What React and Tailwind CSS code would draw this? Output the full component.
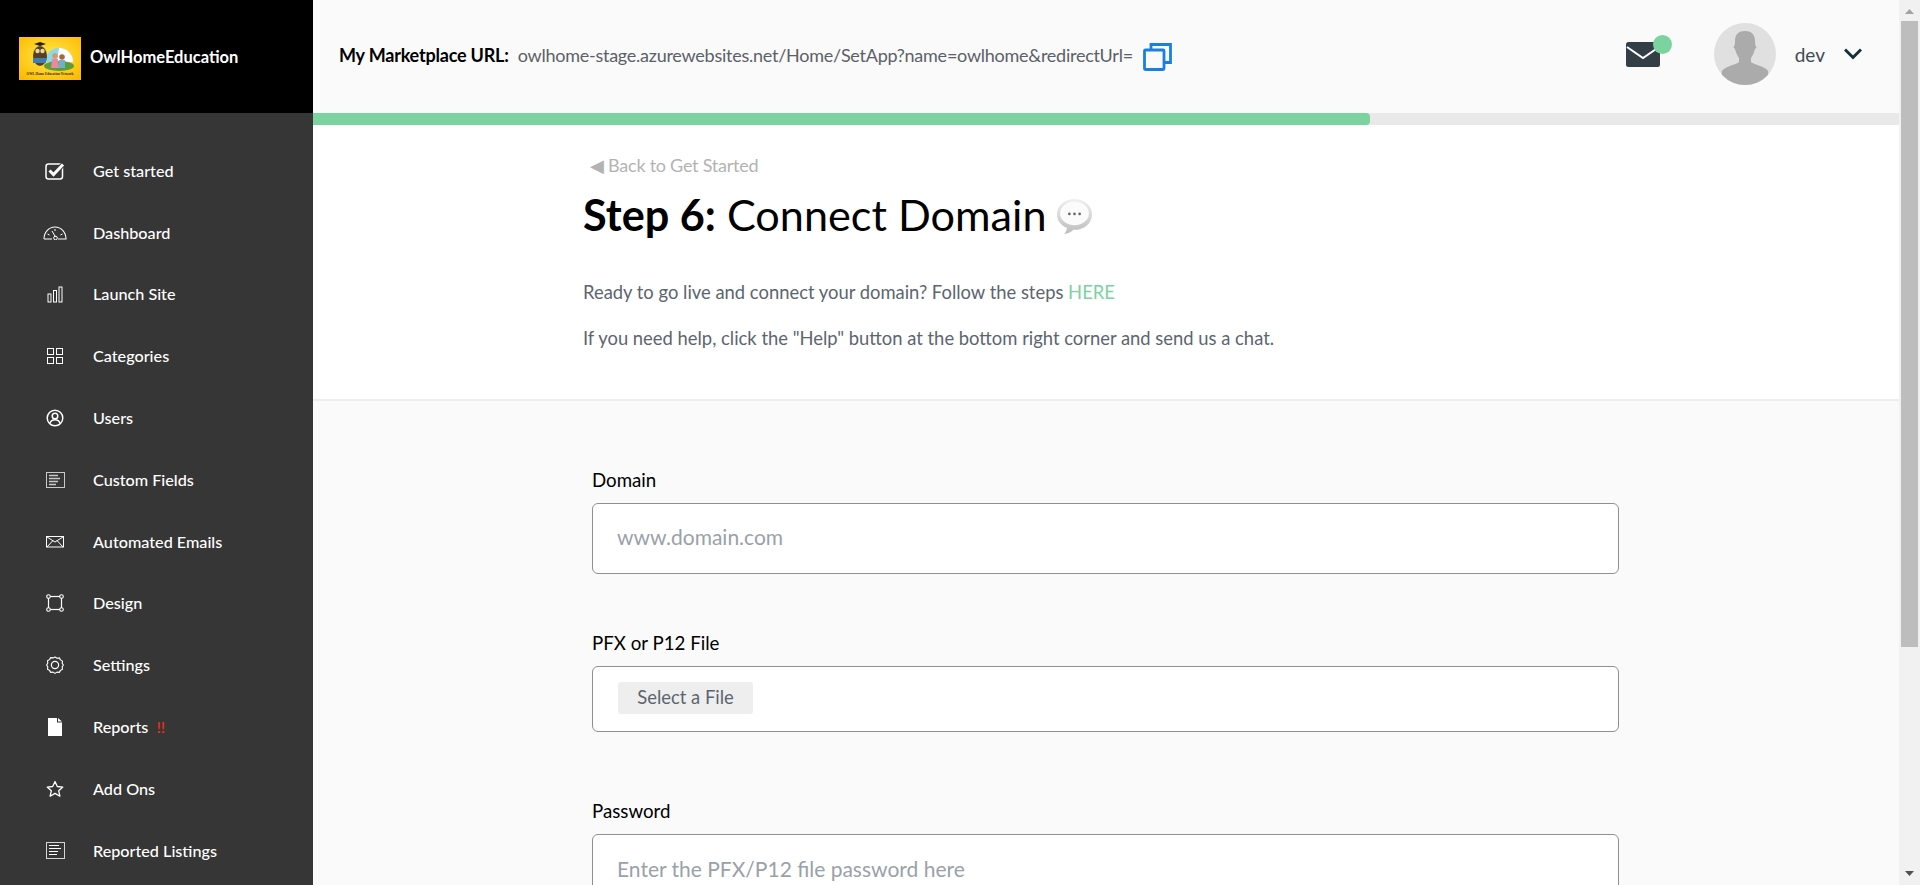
import React from "react";

const stroke = { fill: "none", stroke: "currentColor", strokeWidth: 1.5 };

const icons = {
  check: (
    <svg width="20" height="18" viewBox="0 0 20 18">
      <rect x="1" y="2" width="16.5" height="15" rx="2.5" {...stroke} />
      <path d="M4.5 8.5l4 4L18 2.5" fill="none" stroke="#363636" strokeWidth="5" />
      <path d="M4.5 8.5l4 4L18 2.5" fill="none" stroke="currentColor" strokeWidth="3" />
    </svg>
  ),
  gauge: (
    <svg width="24" height="14" viewBox="0 0 24 14">
      <path d="M1 13C1 6 6 1 12 1s11 5 11 12H15M9 13H1" {...stroke} strokeWidth="1.1" />
      <path d="M9 5l3.5 6M4.5 8l2 1M19.5 8l-2 1M12 3v2" {...stroke} strokeWidth="1" />
      <circle cx="12.5" cy="12" r="1.8" {...stroke} strokeWidth="1" />
    </svg>
  ),
  bars: (
    <svg width="16" height="17" viewBox="0 0 16 17">
      <rect x="1" y="8" width="3" height="8" {...stroke} strokeWidth="1" />
      <rect x="6.5" y="4.5" width="3" height="11.5" {...stroke} strokeWidth="1" />
      <rect x="12" y="1" width="3" height="15" {...stroke} strokeWidth="1" />
    </svg>
  ),
  grid: (
    <svg width="16" height="16" viewBox="0 0 16 16">
      <rect x="0.5" y="0.5" width="6" height="6" {...stroke} strokeWidth="1" />
      <rect x="9.5" y="0.5" width="6" height="6" {...stroke} strokeWidth="1" />
      <rect x="0.5" y="9.5" width="6" height="6" {...stroke} strokeWidth="1" />
      <rect x="9.5" y="9.5" width="6" height="6" {...stroke} strokeWidth="1" />
    </svg>
  ),
  user: (
    <svg width="18" height="18" viewBox="0 0 18 18">
      <circle cx="9" cy="9" r="7.8" {...stroke} />
      <circle cx="9" cy="7" r="2.8" {...stroke} />
      <path d="M3.8 14.5c1-3 3-3.8 5.2-3.8s4.2.8 5.2 3.8" {...stroke} />
    </svg>
  ),
  fields: (
    <svg width="19" height="16" viewBox="0 0 19 16">
      <rect x="0.5" y="0.5" width="18" height="15" fill="none" stroke="#c9c9c9" />
      <path d="M3 3.5h9M3 6.5h11M3 9.5h9M3 12.5h7" stroke="#c9c9c9" strokeWidth="1.4" />
    </svg>
  ),
  mail: (
    <svg width="18" height="12" viewBox="0 0 18 12">
      <rect x="0.5" y="0.5" width="17" height="10.5" {...stroke} strokeWidth="1" />
      <path d="M1 1l8 5 8-5M1 11l6-6.5M17 11l-6-6.5" {...stroke} strokeWidth="1" />
    </svg>
  ),
  design: (
    <svg width="18" height="18" viewBox="0 0 18 18">
      <rect x="2.5" y="2.5" width="13" height="13" {...stroke} strokeWidth="1.2" />
      {[[2.5, 2.5], [15.5, 2.5], [2.5, 15.5], [15.5, 15.5]].map(([cx, cy]) => (
        <circle key={`${cx}-${cy}`} cx={cx} cy={cy} r="1.8" fill="#363636" stroke="currentColor" strokeWidth="1.1" />
      ))}
    </svg>
  ),
  gear: (
    <svg width="18" height="18" viewBox="0 0 18 18">
      <path d="M9 1l2 1.2 2.3-.3 1.2 2 2 1.2-.3 2.3L17.4 9l-1.2 1.900.3 2.300-2 1.200-1.200 2-2.300-.3L9 17.400l-2-1.300-2.300.3-1.200-2-2-1.200.3-2.300L.6 9l1.200-1.900-.3-2.300 2-1.200 1.200-2 2.300.3z" {...stroke} strokeWidth="1.1" strokeLinejoin="round" />
      <circle cx="9" cy="9" r="3.6" {...stroke} strokeWidth="1.2" />
    </svg>
  ),
  file: (
    <svg width="14" height="18" viewBox="0 0 14 18">
      <path d="M0 0h9v4.5h5V18H0zM10 0l4 3.5h-4z" fill="currentColor" />
    </svg>
  ),
  star: (
    <svg width="18" height="18" viewBox="0 0 18 18">
      <path d="M9 1.500l2.300 5 5.500.6-4.100 3.700 1.200 5.400L9 13.400l-4.900 2.800 1.200-5.400L1.200 7.100l5.500-.6z" {...stroke} strokeWidth="1.3" strokeLinejoin="round" />
    </svg>
  ),
  list: (
    <svg width="19" height="17" viewBox="0 0 19 17">
      <rect x="0.5" y="0.5" width="18" height="16" fill="none" stroke="#d5d5d5" />
      <path d="M3 3.5h10M3 6.5h12M3 9.5h9M3 12.5h8" stroke="#fff" strokeWidth="1" />
    </svg>
  ),
};

const menu = [
  { label: "Get started", icon: "check" },
  { label: "Dashboard", icon: "gauge" },
  { label: "Launch Site", icon: "bars" },
  { label: "Categories", icon: "grid" },
  { label: "Users", icon: "user" },
  { label: "Custom Fields", icon: "fields" },
  { label: "Automated Emails", icon: "mail" },
  { label: "Design", icon: "design" },
  { label: "Settings", icon: "gear" },
  { label: "Reports", icon: "file", flag: true },
  { label: "Add Ons", icon: "star" },
  { label: "Reported Listings", icon: "list" },
];

const Logo = () => (
  <svg width="62" height="43" viewBox="0 0 62 43" className="shrink-0">
    <defs>
      <radialGradient id="sun" cx="50%" cy="45%" r="70%">
        <stop offset="0%" stopColor="#ffe94a" />
        <stop offset="100%" stopColor="#fdb900" />
      </radialGradient>
    </defs>
    <rect width="62" height="43" fill="url(#sun)" />
    <path d="M26 25a14 14 0 0 1 28 0z" fill="#8fd8e8" />
    <path d="M40 11a14 14 0 0 1 14 14H38z" fill="#fff" />
    <ellipse cx="40" cy="29" rx="15" ry="5" fill="#5c9e3c" />
    <path d="M15 7l6-2 6 2-6 2z" fill="#222" />
    <ellipse cx="21" cy="19" rx="7" ry="10" fill="#5a4022" />
    <circle cx="18.5" cy="14" r="2.2" fill="#e8d9a0" />
    <circle cx="23.5" cy="14" r="2.2" fill="#e8d9a0" />
    <path d="M14 21h13v5H14z" fill="#3c7fb8" />
    <circle cx="36" cy="19" r="2.8" fill="#d59a6c" />
    <path d="M33 22h6l1 9h-8z" fill="#e58aa0" />
    <circle cx="43" cy="20" r="2.8" fill="#a8683c" />
    <path d="M40 23h6v8h-6z" fill="#6fb0c8" />
    <text x="31" y="37.5" textAnchor="middle" fontSize="3.4" fontWeight="700" fill="#3a2a00" fontFamily="'Liberation Serif', serif">OWL Home Education Network</text>
  </svg>
);

const Avatar = () => (
  <svg width="62" height="62" viewBox="0 0 62 62">
    <clipPath id="avatar-clip"><circle cx="31" cy="31" r="31" /></clipPath>
    <circle cx="31" cy="31" r="31" fill="#e0e0e0" />
    <g clipPath="url(#avatar-clip)" fill="#ababab">
      <path d="M31 8c6 0 10 3 10 10 0 3 .5 5 1.5 6.5l-1.5 1.5c-1 4-2.5 7-4 9v4c3 3 14 4 17 9l2 14H6l2-14c3-5 14-6 17-9v-4c-1.500-2-3-5-4-9l-1.500-1.500C20.500 23 21 21 21 18c0-7 4-10 10-10z" />
    </g>
  </svg>
);

const Bubble = () => (
  <svg width="37" height="37" viewBox="0 0 36 36">
    <defs>
      <linearGradient id="bubble" x1="0" y1="0" x2="0" y2="1">
        <stop offset="0%" stopColor="#f0f0f0" />
        <stop offset="100%" stopColor="#bdbdbd" />
      </linearGradient>
    </defs>
    <path d="M18 1c9 0 17 6 17 15s-8 15-17 15h-1c-2 2-5 4-9 4 2-2 2.5-4 2.5-6C5 27 1 22 1 16 1 7 9 1 18 1z" fill="url(#bubble)" />
    <ellipse cx="18" cy="15" rx="14" ry="11.5" fill="#fbfbfb" />
    <circle cx="13" cy="15.5" r="1.3" fill="#666" />
    <circle cx="18" cy="15.5" r="1.3" fill="#666" />
    <circle cx="23" cy="15.5" r="1.3" fill="#666" />
  </svg>
);

const Field = ({ label, className, children }) => (
  <div className={className}>
    <label className="block text-[18.7px] leading-[22px] text-black">{label}</label>
    {children}
  </div>
);

const App = () => {
  return (
    <div className="flex h-[885px] overflow-hidden bg-[#fafafa] font-['Lato',sans-serif]">
      {/* Sidebar */}
      <aside className="w-[313px] shrink-0 bg-[#363636] text-white">
        <div className="flex h-[113px] items-center bg-black pl-[19px] pt-[4px]">
          <Logo />
          <span className="mb-[3px] ml-[9px] text-[16.5px] font-bold">OwlHomeEducation</span>
        </div>
        <nav className="pt-[27px]">
          {menu.map((item) => (
            <a key={item.label} className="flex h-[61.8px] items-center text-[16.2px] font-medium">
              <span className="flex w-[93px] shrink-0 justify-center pl-[37px] pr-[20px]">{icons[item.icon]}</span>
              {item.label}
              {item.flag && <span className="ml-[8px] font-medium text-[#e8301c]">!!</span>}
            </a>
          ))}
        </nav>
      </aside>

      {/* Main */}
      <div className="min-w-0 flex-1">
        <header className="flex h-[113px] items-center pb-[2px] pl-[26px]">
          <span className="text-[18px] font-bold tracking-[-0.2px] text-black">My Marketplace URL:</span>
          <span className="ml-[9px] text-[18px] tracking-[-0.25px] text-[#5b6167]">owlhome-stage.azurewebsites.net/Home/SetApp?name=owlhome&amp;redirectUrl=</span>
          <svg width="29" height="28" viewBox="0 0 29 28" className="ml-[10px] mt-[2px]">
            <path d="M8 6V1.5h19.5v18H22" fill="none" stroke="#1a80e0" strokeWidth="2.8" />
            <rect x="1.5" y="7" width="19.5" height="19.5" rx="1" fill="none" stroke="#1a80e0" strokeWidth="2.8" />
          </svg>
          <div className="relative mb-[2px] ml-auto mr-[54px] flex h-[25px] w-[34px] items-center">
            <svg width="34" height="25" viewBox="0 0 34 25">
              <rect width="34" height="25" rx="2.5" fill="#343e47" />
              <path d="M1 5l16 11L33 5" fill="none" stroke="#fff" strokeWidth="2" />
            </svg>
            <span className="absolute -right-[12px] -top-[7px] h-[19px] w-[19px] rounded-full bg-[#7bd3a0]" />
          </div>
          <span className="mb-[3px]"><Avatar /></span>
          <span className="mb-[1px] ml-[19px] text-[19px] text-[#3f4a57]">dev</span>
          <svg width="18" height="12" viewBox="0 0 18 12" className="mb-[4px] ml-[19px] mr-[37px]">
            <path d="M1 1.500l8 8 8-8" fill="none" stroke="#14303a" strokeWidth="3" />
          </svg>
        </header>

        <div className="h-[12px] bg-[#e9e9e9]">
          <div className="h-full w-[1057px] rounded-r-[4px] bg-[#7bd3a0]" />
        </div>

        <section className="h-[276px] border-b-2 border-[#eeeeee] bg-white pl-[270px] pt-[29px]">
          <a className="ml-[7px] block text-[18px] leading-[22px] tracking-[-0.25px] text-[#b3b3b3]">◀ Back to Get Started</a>
          <div className="mt-[8px] flex h-[60px] items-center">
            <h1 className="text-[43.2px] leading-[60px] text-black">
              <b>Step 6:</b> Connect Domain
            </h1>
            <span className="ml-[9px] mt-[5px]"><Bubble /></span>
          </div>
          <p className="mt-[36px] text-[18.4px] leading-[24px] text-[#5c6570]">
            Ready to go live and connect your domain? Follow the steps <a className="text-[#7bd3a0]">HERE</a>
          </p>
          <p className="mt-[22px] text-[18.4px] leading-[24px] text-[#5c6570]">
            If you need help, click the "Help" button at the bottom right corner and send us a chat.
          </p>
        </section>

        <form className="pl-[279px] pt-[68px]">
          <Field label="Domain">
            <input
              placeholder="www.domain.com"
              className="mt-[12px] block h-[71px] w-[1027px] rounded-[6px] border border-[#8f8f8f] bg-white px-[24px] pb-[4px] text-[21px] placeholder:text-[#9aa1a9]"
            />
          </Field>
          <Field label="PFX or P12 File" className="mt-[58px]">
            <div className="mt-[12px] flex h-[66px] w-[1027px] items-center rounded-[6px] border border-[#8f8f8f] bg-white pb-[2px] pl-[25px]">
              <button type="button" className="h-[32px] w-[135px] rounded-[3px] bg-[#eeeeee] text-[18.4px] text-[#5b646e]">Select a File</button>
            </div>
          </Field>
          <Field label="Password" className="mt-[68px]">
            <input
              placeholder="Enter the PFX/P12 file password here"
              className="mt-[12px] block h-[71px] w-[1027px] rounded-[6px] border border-[#8f8f8f] bg-white px-[24px] pb-[2px] text-[21px] placeholder:text-[#9aa1a9]"
            />
          </Field>
        </form>
      </div>

      {/* Window scrollbar */}
      <div className="flex h-full w-[21px] shrink-0 flex-col items-center bg-[#f1f1f1]">
        <svg width="21" height="21" viewBox="0 0 21 21" className="shrink-0"><path d="M6 14l4.5-5 4.5 5z" fill="#a3a3a3" /></svg>
        <div className="h-[626px] w-[17px] bg-[#bdbdbd]" />
        <svg width="21" height="21" viewBox="0 0 21 21" className="mt-auto shrink-0"><path d="M6 7l4.5 5 4.5-5z" fill="#505050" /></svg>
      </div>
    </div>
  );
};

export default App;
